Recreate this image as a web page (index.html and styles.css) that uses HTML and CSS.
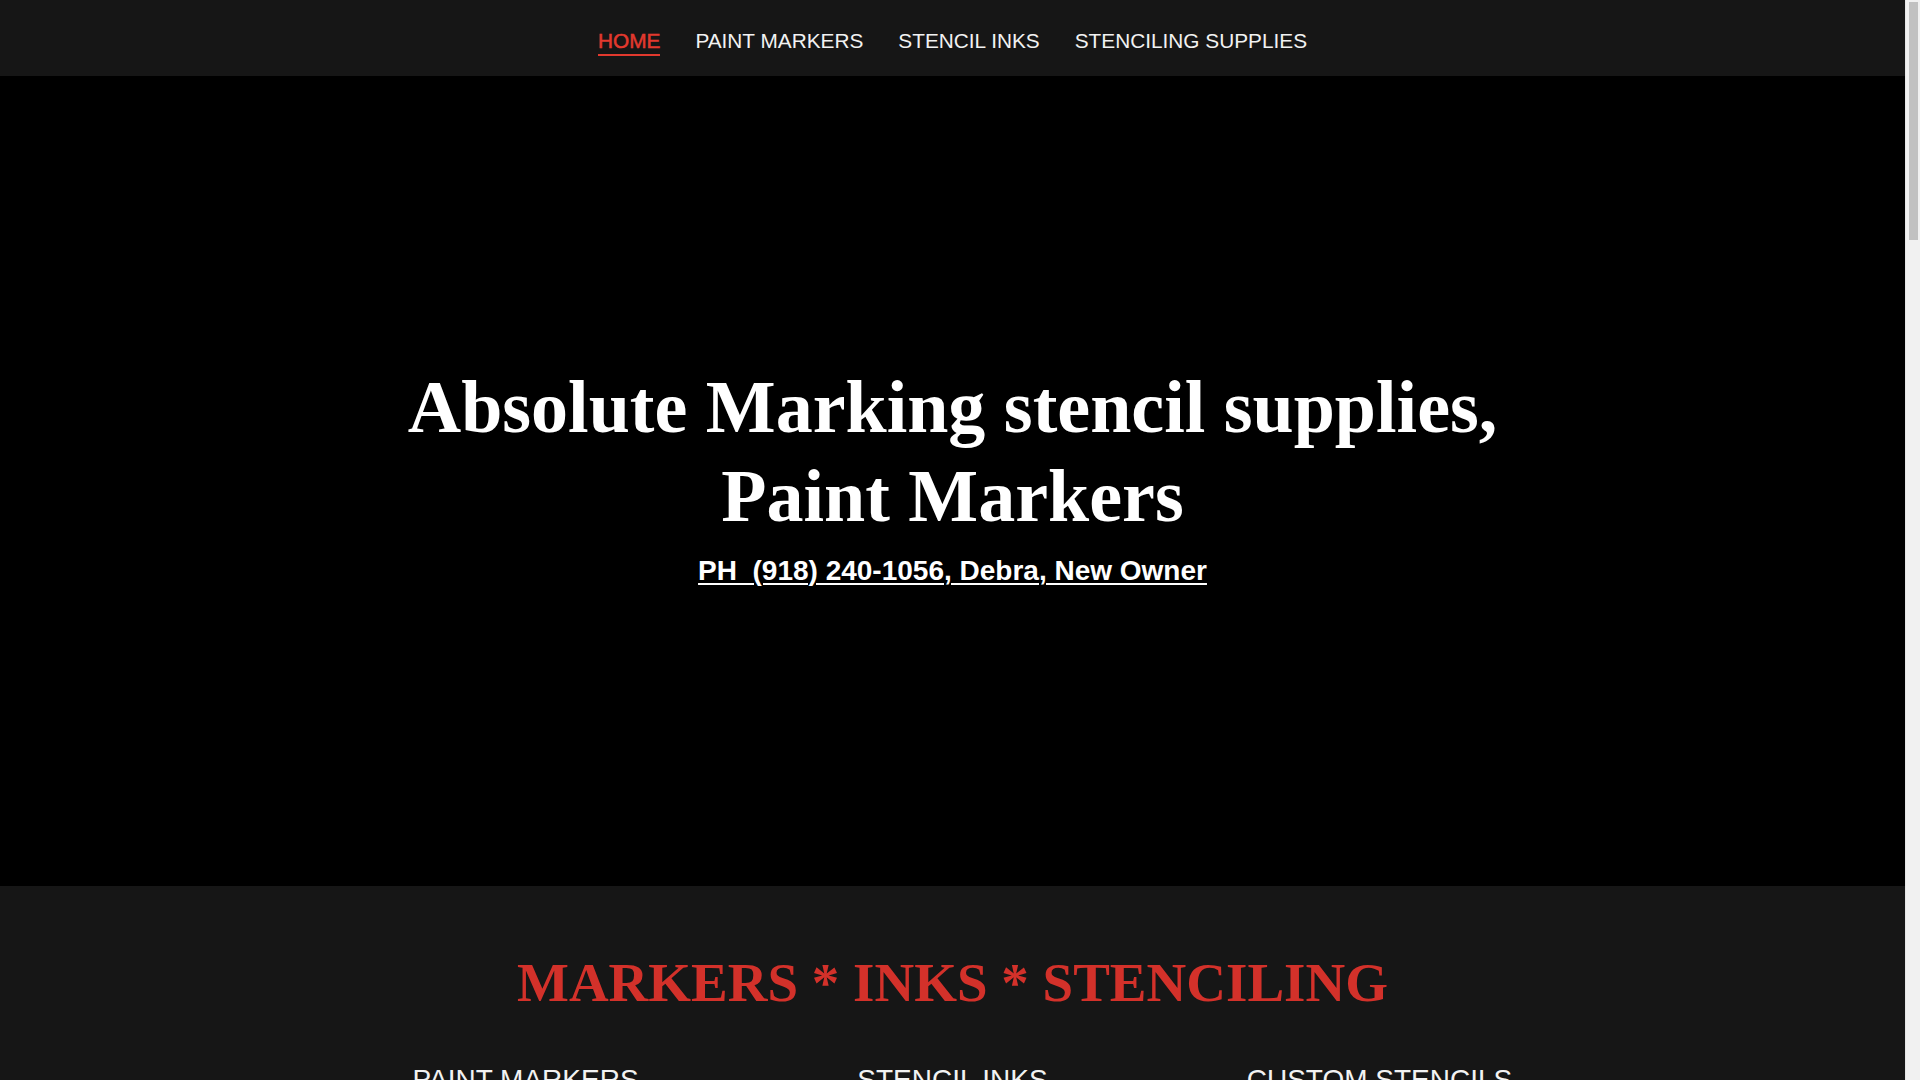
FILE: index.html
```html
<!DOCTYPE html>
<html lang="en">
<head>
<meta charset="utf-8">
<title>Absolute Marking</title>
<link rel="stylesheet" href="styles.css">
</head>
<body>
<header class="topbar">
  <nav class="nav">
    <a class="nav-link active" href="#">HOME</a>
    <a class="nav-link" href="#">PAINT MARKERS</a>
    <a class="nav-link" href="#">STENCIL INKS</a>
    <a class="nav-link" href="#">STENCILING SUPPLIES</a>
  </nav>
</header>
<section class="hero">
  <h1 class="hero-title">Absolute Marking stencil supplies,<br>Paint Markers</h1>
  <a class="hero-phone" href="#">PH&nbsp; (918) 240-1056, Debra, New Owner</a>
</section>
<section class="products">
  <h2 class="products-title">MARKERS * INKS * STENCILING</h2>
  <div class="cols">
    <div class="col">
      <h3 class="col-title">PAINT MARKERS</h3>
      <p class="col-text">Industrial paint markers for marking metal, wood, plastic and more.</p>
    </div>
    <div class="col">
      <h3 class="col-title">STENCIL INKS</h3>
      <p class="col-text">Quick drying stencil inks in a range of colors.</p>
    </div>
    <div class="col">
      <h3 class="col-title">CUSTOM STENCILS</h3>
      <p class="col-text">Custom cut stencils made to your specifications.</p>
    </div>
  </div>
</section>
<div class="scrollbar"><div class="scrollbar-thumb"></div></div>
</body>
</html>
```

FILE: styles.css
```css
html, body {
  margin: 0;
  padding: 0;
  background: #161616;
}
body {
  margin-right: 15px;
  font-family: "Liberation Sans", Arial, sans-serif;
  color: #fff;
}
.topbar {
  height: 76px;
  background: #161616;
  display: flex;
  justify-content: center;
  align-items: flex-start;
}
.nav {
  display: flex;
  gap: 35px;
  padding-top: 29px;
}
.nav-link {
  font-size: 20.8px;
  line-height: 24px;
  color: #f2f2f2;
  text-decoration: none;
  padding-bottom: 1px;
  border-bottom: 2px solid transparent;
}
.nav-link.active {
  color: #e2392e;
  -webkit-text-stroke: 0.5px #e2392e;
  border-bottom-color: #e2392e;
}
.hero {
  background: #000;
  padding: 287px 0 299px;
  display: flex;
  flex-direction: column;
  align-items: center;
  text-align: center;
}
.hero-title {
  margin: 0;
  font-family: "Liberation Serif", "Times New Roman", serif;
  font-weight: bold;
  font-size: 74px;
  line-height: 1.2;
  color: #fff;
}
.hero-phone {
  margin-top: 13px;
  font-weight: bold;
  font-size: 28px;
  line-height: 1.2;
  color: #fff;
  text-decoration: underline;
  text-decoration-thickness: 2px;
  text-underline-offset: 3px;
}
.products {
  background: #161616;
  padding: 64px 0 120px;
  text-align: center;
}
.products-title {
  margin: 0;
  font-family: "Liberation Serif", "Times New Roman", serif;
  font-weight: bold;
  font-size: 55px;
  line-height: 1.2;
  color: #d3312a;
}
.cols {
  width: 1281px;
  margin: 47px auto 0;
  display: grid;
  grid-template-columns: 1fr 1fr 1fr;
}
.col-title {
  margin: 0;
  font-weight: normal;
  font-size: 28px;
  line-height: 1.2;
  color: #f2f2f2;
}
.col-text {
  margin: 24px 0 0;
  font-size: 18px;
  line-height: 1.5;
  color: #cfcfcf;
}
.scrollbar {
  position: fixed;
  top: 0;
  right: 0;
  width: 15px;
  height: 100vh;
  background: #f1f1f1;
  border-left: 1px solid #e6e6e6;
  box-sizing: border-box;
}
.scrollbar-thumb {
  margin: 2px 2px 0 3px;
  height: 238px;
  background: #c1c1c1;
  border-radius: 0;
}
```
